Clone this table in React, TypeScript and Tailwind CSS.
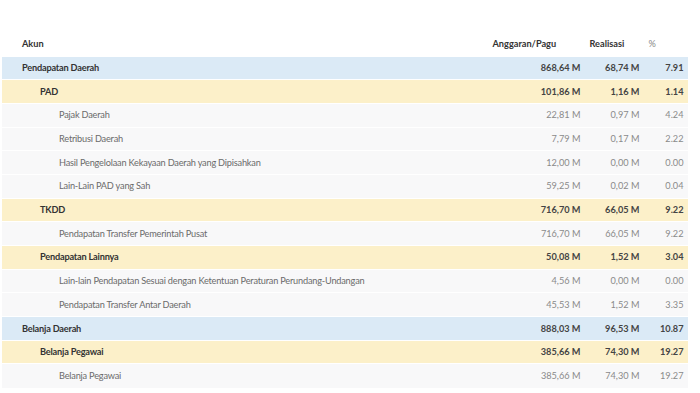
const rows = [
  { name: 'Pendapatan Daerah', pagu: '868,64 M', real: '68,74 M', pct: '7.91', level: 1 },
  { name: 'PAD', pagu: '101,86 M', real: '1,16 M', pct: '1.14', level: 2 },
  { name: 'Pajak Daerah', pagu: '22,81 M', real: '0,97 M', pct: '4.24', level: 3 },
  { name: 'Retribusi Daerah', pagu: '7,79 M', real: '0,17 M', pct: '2.22', level: 3 },
  { name: 'Hasil Pengelolaan Kekayaan Daerah yang Dipisahkan', pagu: '12,00 M', real: '0,00 M', pct: '0.00', level: 3 },
  { name: 'Lain-Lain PAD yang Sah', pagu: '59,25 M', real: '0,02 M', pct: '0.04', level: 3 },
  { name: 'TKDD', pagu: '716,70 M', real: '66,05 M', pct: '9.22', level: 2 },
  { name: 'Pendapatan Transfer Pemerintah Pusat', pagu: '716,70 M', real: '66,05 M', pct: '9.22', level: 3 },
  { name: 'Pendapatan Lainnya', pagu: '50,08 M', real: '1,52 M', pct: '3.04', level: 2 },
  { name: 'Lain-lain Pendapatan Sesuai dengan Ketentuan Peraturan Perundang-Undangan', pagu: '4,56 M', real: '0,00 M', pct: '0.00', level: 3 },
  { name: 'Pendapatan Transfer Antar Daerah', pagu: '45,53 M', real: '1,52 M', pct: '3.35', level: 3 },
  { name: 'Belanja Daerah', pagu: '888,03 M', real: '96,53 M', pct: '10.87', level: 1 },
  { name: 'Belanja Pegawai', pagu: '385,66 M', real: '74,30 M', pct: '19.27', level: 2 },
  { name: 'Belanja Pegawai', pagu: '385,66 M', real: '74,30 M', pct: '19.27', level: 3 },
]

const rowStyle = {
  1: 'bg-[#dbeaf6] font-bold text-[#333]',
  2: 'bg-[#fcf0c9] font-bold text-[#333]',
  3: 'bg-[#f8f8f9] text-[#6b6b6b]',
} as const

const indent = {
  1: 'pl-[20px]',
  2: 'pl-[38px]',
  3: 'pl-[57px]',
} as const

export default function App() {
  return (
    <div className="w-[700px] h-[393px] bg-white pt-[32px] pl-[2px] overflow-hidden font-['Lato',_sans-serif] text-[9.2px]">
      <table className="w-[686px] table-fixed border-collapse">
        <colgroup>
          <col className="w-[486px]" />
          <col className="w-[97px]" />
          <col className="w-[59px]" />
          <col className="w-[44px]" />
        </colgroup>
        <thead>
          <tr className="h-[24px] text-left">
            <th className="pl-[20px] font-bold text-[#333]">Akun</th>
            <th className="px-[4.5px] font-bold text-[#333]">Anggaran/Pagu</th>
            <th className="px-[4.5px] font-bold text-[#333]">Realisasi</th>
            <th className="px-[4.5px] font-normal text-[#888]">%</th>
          </tr>
        </thead>
        <tbody>
          {rows.map((r, i) => {
            const lvl = r.level as 1 | 2 | 3
            const num = lvl === 3 ? 'text-[#8a8a8a]' : 'text-[#444]'
            return (
              <tr key={i} className={`h-[23.7px] border-t border-white ${rowStyle[lvl]}`}>
                <td className={`${indent[lvl]} whitespace-nowrap tracking-[-0.2px]`}>{r.name}</td>
                <td className={`px-[4.5px] text-right ${num}`}>{r.pagu}</td>
                <td className={`px-[4.5px] text-right ${num}`}>{r.real}</td>
                <td className={`px-[4.5px] text-right ${num}`}>{r.pct}</td>
              </tr>
            )
          })}
        </tbody>
      </table>
    </div>
  )
}
